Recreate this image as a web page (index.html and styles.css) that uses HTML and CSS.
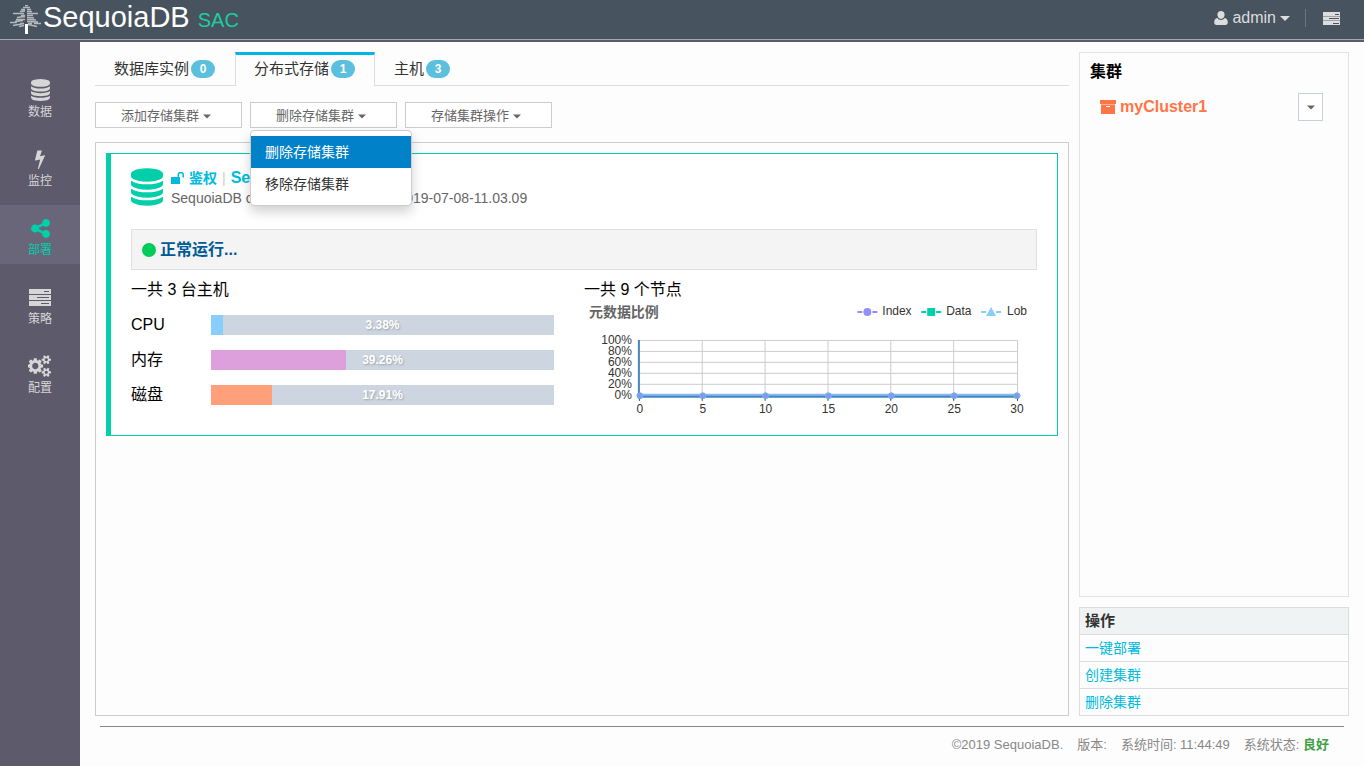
FILE: index.html
```html
<!DOCTYPE html>
<html lang="zh-CN">
<head>
<meta charset="utf-8">
<title>SequoiaDB SAC</title>
<link rel="stylesheet" href="styles.css">
</head>
<body>
<svg class="defs" aria-hidden="true">
  <symbol id="database" viewBox="0 0 1536 1792"><path d="M768 768q237 0 443-43t325-127v170q0 69-103 128t-280 93.5-385 34.5-385-34.5-280-93.5-103-128v-170q119 84 325 127t443 43zm0 768q237 0 443-43t325-127v170q0 69-103 128t-280 93.5-385 34.5-385-34.5-280-93.5-103-128v-170q119 84 325 127t443 43zm0-384q237 0 443-43t325-127v170q0 69-103 128t-280 93.5-385 34.5-385-34.5-280-93.5-103-128v-170q119 84 325 127t443 43zm0-1152q208 0 385 34.5t280 93.5 103 128v128q0 69-103 128t-280 93.5-385 34.5-385-34.5-280-93.5-103-128v-128q0-69 103-128t280-93.5 385-34.5z"/></symbol>
  <symbol id="bolt" viewBox="0 0 1792 1792"><path d="M1333 566q18 20 7 44l-540 1157q-13 25-42 25-4 0-14-2-17-5-25.5-19t-4.5-30l197-808-406 101q-4 1-12 1-18 0-31-11-18-15-13-39l201-825q4-14 16-23t28-9h328q19 0 32 12.500t13 29.500q0 8-5 18l-171 463 396-98q8-2 12-2 19 0 34 15z"/></symbol>
  <symbol id="share" viewBox="128 128 1536 1536"><path d="M1344 1024q133 0 226.500 93.500t93.500 226.500-93.500 226.500-226.500 93.500-226.500-93.500-93.500-226.500q0-12 2-34l-360-180q-92 86-218 86-133 0-226.500-93.500t-93.500-226.500 93.500-226.500 226.500-93.500q126 0 218 86l360-180q-2-22-2-34 0-133 93.500-226.500t226.500-93.500 226.500 93.500 93.500 226.500-93.500 226.500-226.500 93.500q-126 0-218-86l-360 180q2 22 2 34t-2 34l360 180q92-86 218-86z"/></symbol>
  <symbol id="tasks" viewBox="0 0 22 17"><path fill-rule="evenodd" d="M0 0h22v5H0zM15 2v1h5V2zM0 6h22v5H0zM8 8v1h12V8zM0 12h22v5H0zM12 14v1h8v-1z"/></symbol>
  <symbol id="tasks-small" viewBox="0 0 17 13"><path fill-rule="evenodd" d="M0 0h17v4H0zM12 2v1h4V2zM0 9h17v4H0zM10 11v1h6v-1z"/><path fill="#9ba1a6" d="M0 4h17v1H0zM0 8h17v1H0z"/><path fill-rule="evenodd" d="M0 5h17v3H0zM6 6v1h10V6z"/></symbol>
  <symbol id="cogs" viewBox="0 0 1920 1792"><path d="M832 896q0-106-75-181t-181-75-181 75-75 181 75 181 181 75 181-75 75-181zm768 512q0-52-38-90t-90-38-90 38-38 90q0 53 37.500 90.500t90.500 37.500 90.500-37.500 37.500-90.500zm0-1024q0-52-38-90t-90-38-90 38-38 90q0 53 37.500 90.500t90.500 37.500 90.500-37.500 37.500-90.500zm-384 421v185q0 10-7 19.500t-16 10.500l-155 24q-11 35-32 76 34 48 90 115 7 11 7 20 0 12-7 19-23 30-82.500 89.500t-78.500 59.500q-11 0-21-7l-115-90q-37 19-77 31-11 108-23 155-7 24-30 24h-186q-11 0-20-7.500t-10-17.500l-23-153q-34-10-75-31l-118 89q-7 7-20 7-11 0-21-8-144-133-144-160 0-9 7-19 10-14 41-53t47-61q-23-44-35-82l-152-24q-10-1-17-9.500t-7-19.500v-185q0-10 7-19.500t16-10.500l155-24q11-35 32-76-34-48-90-115-7-11-7-20 0-12 7-20 22-30 82-89t79-59q11 0 21 7l115 90q34-18 77-32 11-108 23-154 7-24 30-24h186q11 0 20 7.500t10 17.500l23 153q34 10 75 31l118-89q8-7 20-7 11 0 21 8 144 133 144 160 0 8-7 19-12 16-42 54t-45 60q23 48 34 82l152 23q10 2 17 10.500t7 19.500zm640 533v140q0 16-149 31-12 27-30 52 51 113 51 138 0 4-4 7-122 71-124 71-8 0-46-47t-52-68q-20 2-30 2t-30-2q-14 21-52 68t-46 47q-2 0-124-71-4-3-4-7 0-25 51-138-18-25-30-52-149-15-149-31v-140q0-16 149-31 13-29 30-52-51-113-51-138 0-4 4-7 4-2 35-20t59-34 30-16q8 0 46 46.500t52 67.500q20-2 30-2t30 2q51-71 92-112l6-2q4 0 124 70 4 3 4 7 0 25-51 138 17 23 30 52 149 15 149 31zm0-1024v140q0 16-149 31-12 27-30 52 51 113 51 138 0 4-4 7-122 71-124 71-8 0-46-47t-52-68q-20 2-30 2t-30-2q-14 21-52 68t-46 47q-2 0-124-71-4-3-4-7 0-25 51-138-18-25-30-52-149-15-149-31v-140q0-16 149-31 13-29 30-52-51-113-51-138 0-4 4-7 4-2 35-20t59-34 30-16q8 0 46 46.500t52 67.500q20-2 30-2t30 2q51-71 92-112l6-2q4 0 124 70 4 3 4 7 0 25-51 138 17 23 30 52 149 15 149 31z"/></symbol>
  <symbol id="caret" viewBox="0 0 10 5"><path d="M0 0h10L5 5z"/></symbol>
</svg>
<header class="topbar">
  <div class="brand">
    <svg class="tree" width="32" height="30" viewBox="0 0 32 30" aria-hidden="true">
      <path fill="none" stroke="#b4b9be" stroke-width="1.300" d="M15 .5h3M13 2.500h7M11 4.500h4M17 4.500h4M10 6.500l5-.5M17 6.500h5M3 8.500h11M17 8.500h11M11 10.500h4M17 10.500h6M7 12.500l8-1M17 12.500l7 .5M6 14.500h9M17 14.500l9 .5M5 16.500l8-1M17 16.500l11 .5M0 17.500h7M24 18.500h7M10 18.500h4M18 18.500h4M3 20.500l11-2M18 19.500l9 2M9 21.500l5-1"/>
      <path d="M15 19h3v10h-3z" fill="#fff"/>
    </svg>
    <span class="brand-name">SequoiaDB</span><span class="brand-sub">SAC</span>
  </div>
  <div class="tools">
    <button class="tool user" type="button">
      <svg width="14" height="14" viewBox="0 0 14 14" aria-hidden="true"><path d="M7 0a3.600 3.600 0 0 1 3.600 3.800C10.600 6 9 8 7 8S3.400 6 3.400 3.800A3.600 3.600 0 0 1 7 0zM3.200 7C4.200 8.300 5.500 9 7 9s2.800-.7 3.800-2c2 .3 3 2 3 4.600 0 1.400-.9 2.400-2.400 2.400H2.600C1.100 14 .2 13 .2 11.600.2 9 1.200 7.300 3.200 7z"/></svg>
      <span>admin</span>
      <svg width="10" height="5" aria-hidden="true"><use href="#caret"/></svg>
    </button>
    <button class="tool list" type="button" aria-label="任务"><svg width="17" height="13" aria-hidden="true"><use href="#tasks-small"/></svg></button>
  </div>
</header>
<div class="shell">
  <nav class="sidebar">
    <a class="nav-item" href="#"><svg width="19" height="22"><use href="#database"/></svg><span>数据</span></a>
    <a class="nav-item" href="#"><svg width="20" height="20"><use href="#bolt"/></svg><span>监控</span></a>
    <a class="nav-item active" href="#"><svg width="19" height="19"><use href="#share"/></svg><span>部署</span></a>
    <a class="nav-item" href="#"><svg width="22" height="17"><use href="#tasks"/></svg><span>策略</span></a>
    <a class="nav-item" href="#"><svg width="24" height="22"><use href="#cogs"/></svg><span>配置</span></a>
  </nav>
  <div class="page">
    <div class="columns">
      <main class="main">
        <div class="tabs">
          <button class="tab" type="button">数据库实例 <span class="badge">0</span></button>
          <button class="tab selected" type="button">分布式存储 <span class="badge">1</span></button>
          <button class="tab" type="button">主机 <span class="badge">3</span></button>
        </div>
        <div class="toolbar">
          <button class="btn" type="button">添加存储集群<svg width="8" height="5" preserveAspectRatio="none"><use href="#caret"/></svg></button>
          <div class="dropdown">
            <button class="btn open" type="button">删除存储集群<svg width="8" height="5"><use href="#caret"/></svg></button>
            <div class="menu">
              <a class="menu-item current" href="#">删除存储集群</a>
              <a class="menu-item" href="#">移除存储集群</a>
            </div>
          </div>
          <button class="btn" type="button">存储集群操作<svg width="8" height="5"><use href="#caret"/></svg></button>
        </div>
        <section class="list-box">
          <article class="card">
            <div class="card-head">
              <svg class="card-icon" width="32" height="38"><use href="#database"/></svg>
              <div>
                <div class="card-title"><svg width="13" height="12" viewBox="0 0 13 12" aria-hidden="true"><path d="M0 5h6.500V3a3.250 3.250 0 0 1 6.500 0v2.500h-1.500V3a1.750 1.750 0 0 0-3.500 0v2h1v7H0z"/></svg><a href="#">鉴权</a><span class="bar">|</span><a class="name" href="#">SequoiaDB</a></div>
                <div class="card-sub">SequoiaDB cluster deployments, on 2019-07-08-11.03.09</div>
              </div>
            </div>
            <div class="status"><span class="dot"></span>正常运行...</div>
            <div class="stats">
              <div class="hosts">
                <div class="stat-title">一共 3 台主机</div>
                <div class="meter-row"><span>CPU</span><div class="meter"><div class="fill cpu" style="width:3.380%"></div><b>3.38%</b></div></div>
                <div class="meter-row"><span>内存</span><div class="meter"><div class="fill mem" style="width:39.260%"></div><b>39.26%</b></div></div>
                <div class="meter-row"><span>磁盘</span><div class="meter"><div class="fill disk" style="width:17.910%"></div><b>17.91%</b></div></div>
              </div>
              <div class="nodes">
                <div class="stat-title">一共 9 个节点</div>
                <svg class="chart" viewBox="0 0 454 114" role="img" aria-label="元数据比例">
                  <text class="chart-title" x="5" y="16">元数据比例</text>
                  <g stroke-width="2"><path d="M274 11h20" stroke="#9090fa" stroke-dasharray="5 10 5"/><path d="M338 11h20" stroke="#00cfaa" stroke-dasharray="5 10 5"/><path d="M398 11h20" stroke="#87cefa" stroke-dasharray="5 10 5"/></g>
                  <circle cx="284" cy="11" r="4" fill="#9090fa"/><path d="M344 7h8v8h-8z" fill="#00cfaa"/><path d="M408 6l5 9h-10z" fill="#87cefa"/>
                  <text x="299" y="14">Index</text><text x="363" y="14">Data</text><text x="424" y="14">Lob</text>
                  <path class="grid" d="M56 39.500h378.500v56M56 50.500h378M56 61.500h378M56 72.500h378M56 83.500h378M118.500 40v56M181.500 40v56M244.500 40v56M307.500 40v56M370.500 40v56"/>
                  <path d="M54 39h2v58h-2zM54 94h381v3H54z" fill="#4488bb"/>
                  <path d="M55 93h380v2H55z" fill="#87b8f0"/>
                  <path class="ticks" d="M55.500 97v3M118.500 97v3M181.500 97v3M244.500 97v3M307.500 97v3M370.500 97v3M434.500 97v3"/>
                  <g class="marks"><circle cx="56" cy="95" r="3"/><circle cx="119" cy="95" r="3"/><circle cx="182" cy="95" r="3"/><circle cx="245" cy="95" r="3"/><circle cx="308" cy="95" r="3"/><circle cx="371" cy="95" r="3"/><circle cx="434" cy="95" r="3"/></g>
                  <g text-anchor="end"><text x="48" y="43">100%</text><text x="48" y="54">80%</text><text x="48" y="65">60%</text><text x="48" y="76">40%</text><text x="48" y="87">20%</text><text x="48" y="98">0%</text></g>
                  <g text-anchor="middle"><text x="56" y="112">0</text><text x="119" y="112">5</text><text x="182" y="112">10</text><text x="245" y="112">15</text><text x="308" y="112">20</text><text x="371" y="112">25</text><text x="434" y="112">30</text></g>
                </svg>
              </div>
            </div>
          </article>
        </section>
      </main>
      <aside class="aside">
        <section class="clusters">
          <h2>集群</h2>
          <div class="cluster">
            <svg width="16" height="14" viewBox="0 0 16 14" aria-hidden="true"><path fill-rule="evenodd" d="M0 0h16v4H0zM1 4h14v10H1zM6 6v1h4V6z"/><path d="M1 4h14v1H1z" fill="#ffb59c"/></svg>
            <span>myCluster1</span>
            <button class="mini" type="button" aria-label="集群菜单"><svg width="8" height="5"><use href="#caret"/></svg></button>
          </div>
        </section>
        <section class="actions">
          <h2>操作</h2>
          <a href="#">一键部署</a>
          <a href="#">创建集群</a>
          <a href="#">删除集群</a>
        </section>
      </aside>
    </div>
    <footer class="footer"><span>©2019 SequoiaDB.</span><span>版本:</span><span>系统时间: 11:44:49</span><span>系统状态: <b>良好</b></span></footer>
  </div>
</div>
</body>
</html>
```
FILE: styles.css
```css
* { box-sizing: border-box; }
body {
  margin: 0;
  height: 100vh;
  display: flex;
  flex-direction: column;
  background: #fdfdfd;
  color: #000;
  font: 16px/22px "Liberation Sans", "Noto Sans CJK SC", sans-serif;
}
button { font: inherit; color: inherit; background: none; border: 0; padding: 0; cursor: pointer; }
a { color: #00bbdd; text-decoration: none; }
h2 { margin: 0; }
svg { fill: currentColor; flex: none; display: block; }
.defs { position: absolute; width: 0; height: 0; }

.topbar {
  display: flex;
  justify-content: space-between;
  height: 42px;
  flex: none;
  padding: 0 24px 0 10px;
  background: #47535f;
  border-bottom: 2px solid #5c5a6b;
  box-shadow: inset 0 -1px #a9a7b2;
}
.brand { display: flex; align-items: flex-start; color: #fff; }
.tree { margin-top: 5px; }
.brand-name { font-size: 29px; line-height: 35px; margin-left: 1px; }
.brand-sub { font-size: 20px; line-height: 40px; margin-left: 8px; color: #1fcc9f; }
.tools { display: flex; align-items: center; color: #ddd; height: 36px; }
.user { display: flex; align-items: center; gap: 4px; padding-right: 15px; }
.list { border-left: 1px solid #71767e; height: 18px; padding-left: 17px; }

.shell { display: flex; flex: 1; min-height: 0; }
.sidebar { flex: 0 0 80px; background: #5c5a6b; padding-top: 25px; display: flex; flex-direction: column; gap: 10px; }
.nav-item {
  flex: 0 0 59px;
  padding-top: 10px;
  display: grid;
  grid-template-rows: 26px 18px;
  align-content: start;
  justify-items: center;
  align-items: center;
  color: #d6d6d6;
  font-size: 12px;
  line-height: 18px;
}
.nav-item.active { background: #686678; color: #00cfaa; }

.page { flex: 1; min-width: 0; display: flex; flex-direction: column; padding: 10px 15px 0; }
.columns { flex: 1; min-height: 0; display: flex; gap: 10px; }
.main { flex: 1; min-width: 0; display: flex; flex-direction: column; }
.tabs { display: flex; height: 34px; border-bottom: 1px solid #ddd; flex: none; }
.tab { display: flex; align-items: center; gap: 2px; height: 34px; padding: 0 20px 0 19px; font-size: 15px; color: #333; }
.tab.selected { border: 1px solid #ddd; border-width: 3px 1px 0; border-top-color: #00b4e5; background: #fdfdfd; padding: 0 19px 3px 18px; }
.badge { background: #5bc0de; color: #fff; border-radius: 10px; width: 24px; height: 18px; font-size: 12px; line-height: 18px; font-weight: bold; text-align: center; }

.toolbar { display: flex; gap: 8px; margin: 16px 0 14px; flex: none; }
.btn { width: 147px; height: 26px; padding: 2px 5px 0 0; border: 1px solid #ccc; background: #fff; color: #666; font-size: 13px; display: flex; align-items: center; justify-content: center; gap: 4px; }
.dropdown { position: relative; }
.menu {
  position: absolute;
  z-index: 2;
  top: 28px;
  left: 0;
  width: 162px;
  padding: 5px 0;
  background: #fff;
  border: 1px solid #ccc;
  border-radius: 4px;
  box-shadow: 0 6px 12px rgba(0, 0, 0, .18);
}
.menu-item { display: block; padding: 5px 14px; font-size: 14px; color: #333; }
.menu-item.current { background: #0081c8; color: #fff; }

.list-box { flex: 1; border: 1px solid #ccc; padding: 10px; }
.card { border: 1px solid #00cfaa; border-left-width: 5px; padding: 14px 20px 20px; background: #fff; }
.card-head { display: flex; gap: 8px; align-items: flex-start; height: 50px; }
.card-title { display: flex; align-items: center; gap: 5px; font-size: 14px; font-weight: bold; color: #00bbdd; line-height: 20px; }
.card-title .bar { color: #ccc; font-weight: normal; }
.card-title .name { font-size: 16px; }
.card-icon { color: #00cfaa; }
.card-sub { font-size: 14px; line-height: 20px; color: #666; }
.status { margin-top: 11px; height: 41px; border: 1px solid #e0e0e0; background: #f4f4f4; display: flex; align-items: center; gap: 4px; padding-left: 10px; font-weight: bold; color: #005a94; }
.dot { width: 14px; height: 14px; border-radius: 50%; background: #00cc5c; }
.stats { display: grid; grid-template-columns: 1fr 1fr; padding-top: 9px; }
.hosts { padding-right: 30px; }
.meter-row { display: flex; align-items: center; height: 20px; margin-top: 15px; }
.stat-title + .meter-row { margin-top: 14px; }
.meter-row span { width: 80px; }
.meter { position: relative; flex: 1; height: 20px; background: #cdd6e0; }
.meter b { position: absolute; inset: 0; text-align: center; font-size: 12px; line-height: 20px; color: #fff; text-shadow: 1px 1px 2px rgba(0, 0, 0, .25); }
.fill { height: 20px; }
.cpu { background: #87cefa; }
.mem { background: #dda0dd; }
.disk { background: #ffa07a; }
.chart { width: 100%; font-size: 12px; fill: #333; }
.chart-title { font-size: 14px; font-weight: bold; fill: #666; }
.grid { fill: none; stroke: #ccc; }
.ticks { stroke: #333; }
.marks { fill: #9090fa; stroke: #5ec0d8; }

.aside { flex: 0 0 270px; display: flex; flex-direction: column; gap: 10px; }
.clusters { flex: 1; border: 1px solid #e0e4e6; padding: 8px 25px 0 10px; }
.clusters h2 { font-size: 16px; line-height: 22px; }
.cluster { display: flex; align-items: center; gap: 4px; padding-left: 10px; margin-top: 10px; color: #ff7548; font-weight: bold; }
.mini { margin-left: auto; width: 25px; height: 28px; border: 1px solid #c6d1dd; background: #fff; color: #666; display: flex; align-items: center; justify-content: center; }
.actions { border: 1px solid #ddd; display: grid; grid-template-rows: 26px; grid-auto-rows: 27px; font-size: 14px; line-height: 26px; }
.actions h2 { font-size: 15px; line-height: 26px; padding-left: 5px; background: #eff3f4; color: #333; }
.actions a { border-top: 1px solid #ddd; padding-left: 5px; }

.footer { height: 40px; margin: 10px 5px 0; padding-right: 15px; border-top: 1px solid #888; display: flex; justify-content: flex-end; gap: 14px; font-size: 13px; line-height: 36px; color: #888; flex: none; }
.footer b { color: #43a047; }
```
